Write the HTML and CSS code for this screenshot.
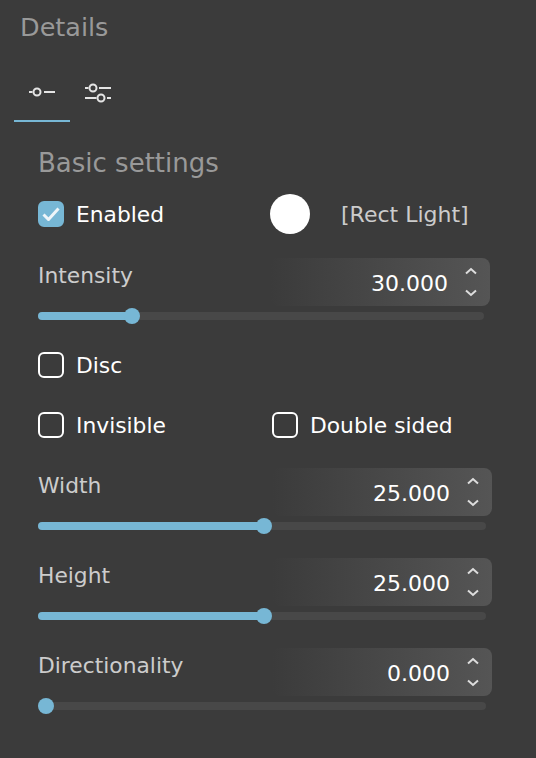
FILE: index.html
```html
<!DOCTYPE html>
<html lang="en">
    <head>
        <meta charset="UTF-8">
        <meta name="viewport" content="width=device-width, initial-scale=1.0">
        <title>Details</title>
        <link rel="stylesheet" href="styles.css">
    </head>

    <body>

        <h1 class="title">Details</h1>

        <!-- Tabs -->

        <div class="tabs">
            <div class="tab active">
                <svg width="28" height="20" viewBox="0 0 28 20">
                    <path d="M1 10h3.5M16 10h11"/>
                    <circle cx="9" cy="10" r="3.5"/>
                </svg>
            </div>
            <div class="tab">
                <svg width="28" height="20" viewBox="0 0 28 20">
                    <path d="M1 5h3.5M15 5h12M1 15h11.500M23 15h4"/>
                    <circle cx="9" cy="5" r="3.5"/>
                    <circle cx="17" cy="15" r="3.5"/>
                </svg>
            </div>
        </div>

        <!-- Basic settings -->

        <section class="settings">
            <h2 class="section-title">Basic settings</h2>

            <div class="row row-enabled">
                <label class="check checked">
                    <span class="box">
                        <svg width="18" height="14" viewBox="0 0 18 14"><path d="M1.500 7.500l5 5 10-11"/></svg>
                    </span>
                    <span class="check-text">Enabled</span>
                </label>
                <span class="color-dot"></span>
                <span class="light-type">[Rect Light]</span>
            </div>

            <div class="slider slider-narrow">
                <div class="slider-head">
                    <span class="slider-label">Intensity</span>
                    <div class="spin">
                        <span class="spin-value">30.000</span>
                        <svg class="arrows" width="12" height="30" viewBox="0 0 12 30"><path d="M1 6.500l5-4.500 5 4.500M1 23.500l5 4.500 5-4.500"/></svg>
                    </div>
                </div>
                <div class="track"><div class="fill" style="width: 21.100%"></div></div>
            </div>

            <div class="row row-disc">
                <label class="check"><span class="box"></span><span class="check-text">Disc</span></label>
            </div>

            <div class="row row-flags">
                <label class="check check-half"><span class="box"></span><span class="check-text">Invisible</span></label>
                <label class="check"><span class="box"></span><span class="check-text">Double sided</span></label>
            </div>

            <div class="slider slider-first">
                <div class="slider-head">
                    <span class="slider-label">Width</span>
                    <div class="spin">
                        <span class="spin-value">25.000</span>
                        <svg class="arrows" width="12" height="30" viewBox="0 0 12 30"><path d="M1 6.500l5-4.500 5 4.500M1 23.500l5 4.500 5-4.500"/></svg>
                    </div>
                </div>
                <div class="track"><div class="fill" style="width: 50.450%"></div></div>
            </div>

            <div class="slider">
                <div class="slider-head">
                    <span class="slider-label">Height</span>
                    <div class="spin">
                        <span class="spin-value">25.000</span>
                        <svg class="arrows" width="12" height="30" viewBox="0 0 12 30"><path d="M1 6.500l5-4.500 5 4.500M1 23.500l5 4.500 5-4.500"/></svg>
                    </div>
                </div>
                <div class="track"><div class="fill" style="width: 50.450%"></div></div>
            </div>

            <div class="slider">
                <div class="slider-head">
                    <span class="slider-label">Directionality</span>
                    <div class="spin">
                        <span class="spin-value">0.000</span>
                        <svg class="arrows" width="12" height="30" viewBox="0 0 12 30"><path d="M1 6.500l5-4.500 5 4.500M1 23.500l5 4.500 5-4.500"/></svg>
                    </div>
                </div>
                <div class="track"><div class="fill fill-zero" style="width: 8px"></div></div>
            </div>
        </section>

    </body>
</html>
```

FILE: styles.css
```css
body {
    margin: 0;
    height: 758px;
    overflow: hidden;
    background: #3b3b3b;
    color: #fff;
    font-family: "DejaVu Sans", sans-serif;
}

.title {
    margin: 0;
    padding: 12px 0 0 20px;
    height: 47px;
    box-sizing: border-box;
    font-size: 25.500px;
    line-height: 30px;
    font-weight: normal;
    color: #999;
}

/* Tabs */

.tabs {
    display: flex;
    margin: 17px 0 0 14px;
}

.tab {
    display: flex;
    justify-content: center;
    align-items: center;
    box-sizing: border-box;
    width: 56px;
    height: 58px;
}

.tab.active {
    border-bottom: 2px solid #77b7d5;
}

.tab svg {
    fill: none;
    stroke: #e4e4e4;
    stroke-width: 2;
}

/* Section */

.settings {
    padding: 25px 44px 0 38px;
}

.section-title {
    margin: 0;
    height: 32px;
    font-size: 26px;
    line-height: 32px;
    font-weight: normal;
    color: #999;
}

.row {
    display: flex;
    align-items: center;
}

.row-enabled {
    height: 40px;
    margin-top: 15px;
}

.row-disc {
    margin-top: 32px;
    height: 26px;
}

.row-flags {
    margin-top: 34px;
    height: 26px;
}

.check {
    display: flex;
    align-items: center;
    gap: 12px;
    font-size: 21.800px;
    line-height: 26px;
    color: #fff;
}

.check-text {
    margin-top: 2px;
}

.check-half {
    width: 234px;
}

.row-enabled .check {
    width: 232px;
}

.box {
    display: flex;
    justify-content: center;
    align-items: center;
    box-sizing: border-box;
    width: 26px;
    height: 26px;
    border: 2px solid #fff;
    border-radius: 6px;
}

.checked .box {
    background: #77b7d5;
    border-color: #77b7d5;
}

.box svg {
    flex: none;
    fill: none;
    stroke: #eef5f9;
    stroke-width: 3;
}

.color-dot {
    width: 40px;
    height: 40px;
    border-radius: 50%;
    background: #fff;
}

.light-type {
    margin-left: 31px;
    font-size: 22px;
    color: #ccc;
}

/* Sliders */

.slider {
    margin-top: 28px;
}

.slider-narrow {
    margin: 24px 2px 0 0;
}

.slider-first {
    margin-top: 30px;
}

.slider-head {
    display: flex;
    justify-content: space-between;
    height: 48px;
}

.slider-label {
    font-size: 21.800px;
    line-height: 36px;
    color: #ccc;
}

.spin {
    display: flex;
    justify-content: flex-end;
    align-items: center;
    box-sizing: border-box;
    width: 220px;
    padding-right: 13px;
    border-radius: 8px;
    background: linear-gradient(to right, rgba(85, 85, 85, 0), #555);
}

.spin-value {
    margin-top: 3px;
    margin-right: 17px;
    font-size: 22px;
}

.arrows {
    fill: none;
    stroke: #ddd;
    stroke-width: 2;
}

.track {
    margin: 6px 6px 0 0;
    height: 8px;
    border-radius: 4px;
    background: #484848;
}

.fill {
    position: relative;
    height: 100%;
    border-radius: 4px;
    background: #77b7d5;
}

.fill::after {
    content: "";
    position: absolute;
    top: -4px;
    right: -8px;
    width: 16px;
    height: 16px;
    border-radius: 50%;
    background: #77b7d5;
}

.fill-zero {
    background: none;
}
```
